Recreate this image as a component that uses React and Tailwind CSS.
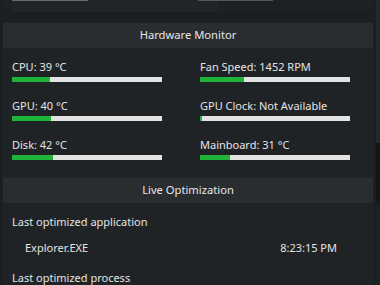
import React from 'react';

const sensors = [
    { label: 'CPU: 39 °C', value: 25 },
    { label: 'Fan Speed: 1452 RPM', value: 29 },
    { label: 'GPU: 40 °C', value: 26 },
    { label: 'GPU Clock: Not Available', value: 1 },
    { label: 'Disk: 42 °C', value: 27 },
    { label: 'Mainboard: 31 °C', value: 20 },
];

function Meter({ label, value }) {
    return (
        <div className="flex flex-col">
            <span className="text-[11px] leading-[14px] text-[#e4e4e4]">{label}</span>
            <div className="mt-[3px] h-[5px] w-[150px] bg-[#e3e3e3]">
                <div className="h-full bg-[#1fb33a]" style={{ width: `${value}%` }} />
            </div>
        </div>
    );
}

function SectionHeader({ title }) {
    return (
        <div className="h-[25px] shrink-0 flex items-center justify-center bg-[#2a2d30] text-[11.2px] text-[#e6e6e6]">
            {title}
        </div>
    );
}

function App() {
    return (
        <div
            className="w-[380px] h-[285px] overflow-hidden bg-[#1c1f22] flex"
            style={{ fontFamily: '"Noto Sans", "Open Sans", sans-serif' }}
        >
            <div className="flex-1 pl-[3px] pr-[3px] flex flex-col">
                {/* bottom of the section above */}
                <div className="h-[12px] shrink-0 flex bg-[#1e2124]">
                    <div className="ml-[9px] w-[206px] h-full bg-[#212428]">
                        <div className="w-[76px] h-[1px] bg-[#6a6d70]" />
                    </div>
                    <div className="ml-[-20px] w-[75px] h-[1px] bg-[#55585b]" />
                </div>
                <div className="h-[11px] shrink-0" />

                <SectionHeader title="Hardware Monitor" />
                <div className="bg-[#202326] pl-[9px] pt-[12px] pb-[18px] grid grid-cols-[188px_1fr] gap-y-[17px]">
                    {sensors.map((s) => (
                        <Meter key={s.label} label={s.label} value={s.value} />
                    ))}
                </div>

                <SectionHeader title="Live Optimization" />
                <div className="bg-[#202326] flex-1 pl-[9px] pr-[36px] pt-[12px] text-[11px] text-[#e4e4e4]">
                    <div className="leading-[14px]">Last optimized application</div>
                    <div className="mt-[12px] pl-[13px] flex justify-between leading-[14px]">
                        <span>Explorer.EXE</span>
                        <span>8:23:15 PM</span>
                    </div>
                    <div className="mt-[16px] leading-[14px]">Last optimized process</div>
                </div>
            </div>
            <div className="w-[4px] flex flex-col">
                <div className="h-[143px] bg-[#26292c]" />
                <div className="h-[60px] bg-[#141618]" />
                <div className="flex-1 bg-[#1e2124]" />
            </div>
        </div>
    );
}

export default App;
